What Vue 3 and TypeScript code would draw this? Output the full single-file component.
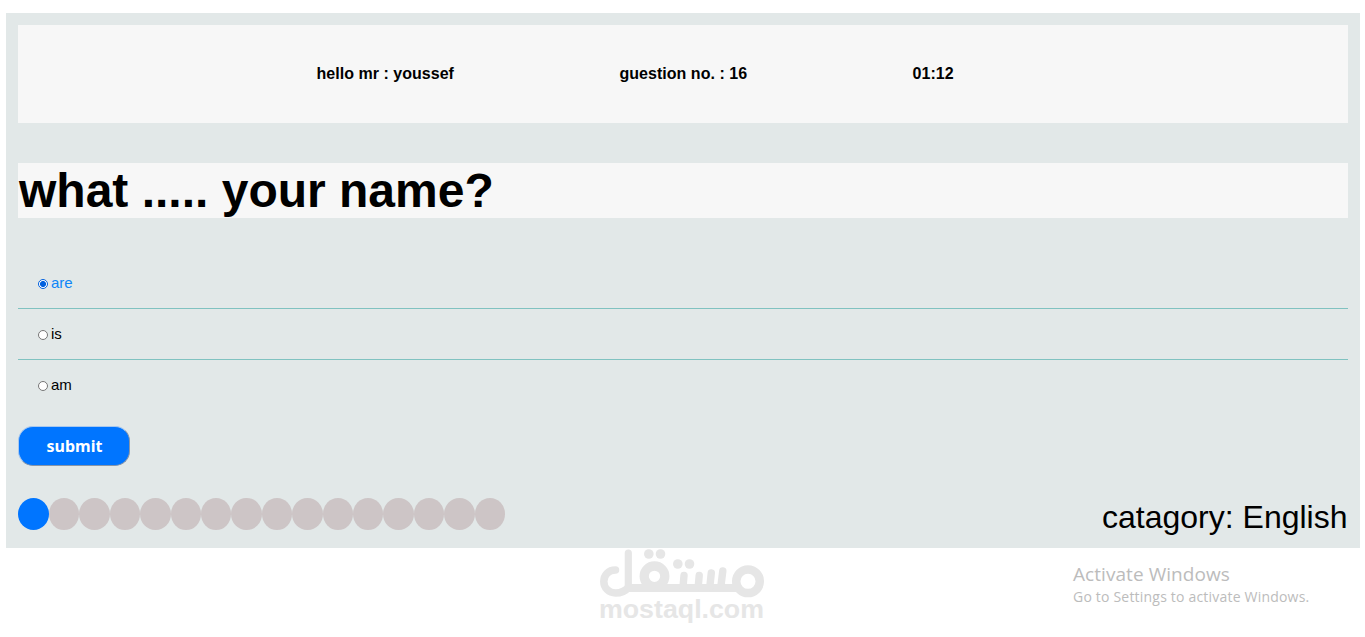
<script setup lang="ts">
import { ref } from 'vue'

const answers: string[] = ['are', 'is', 'am']
const selected = ref<string>('are')
const questionCount = 16
const current = 1
</script>

<template>
  <main class="page">
    <section class="quiz">
      <header class="info">
        <span>hello mr : youssef</span>
        <span>guestion no. : 16</span>
        <span>01:12</span>
      </header>
      <h1 class="question">what ..... your name?</h1>
      <div class="answers">
        <label v-for="a in answers" :key="a" class="answer" :class="{ chosen: selected === a }">
          <input v-model="selected" type="radio" name="answer" :value="a" />
          <span class="mark"></span>
          <span>{{ a }}</span>
        </label>
      </div>
      <button class="submit" type="button">submit</button>
      <footer class="bottom">
        <div class="dots">
          <span v-for="n in questionCount" :key="n" class="dot" :class="{ on: n === current }"></span>
        </div>
        <div class="category">catagory: English</div>
      </footer>
    </section>

    <svg class="brand" width="190" height="90" viewBox="0 0 190 90">
      <g fill="none" stroke="#e6e6e6" stroke-linecap="round" stroke-linejoin="round">
        <path stroke-width="7.5" d="M25.500 30C18.500 30 13.800 35 13.800 41.500C13.800 48 19 53 25.500 53C31 53 35 51.500 38.300 47.500" />
        <path stroke-width="7.2" d="M38.300 13V47" />
        <circle cx="64.500" cy="36.300" r="10.300" stroke-width="9.300" />
        <circle cx="158" cy="41.300" r="11.800" stroke-width="8.500" />
        <path stroke-width="8.200" stroke-linecap="butt" d="M35 48H147" />
        <path stroke-width="7.400" d="M94 35.500L93 47M109.200 35.500L108.200 47M121.300 33L119.800 47M132.800 31L130.800 47" />
      </g>
      <g fill="#e6e6e6">
        <circle cx="58.800" cy="14" r="4.800" />
        <circle cx="70.500" cy="14" r="4.800" />
        <circle cx="87.800" cy="24" r="4.800" />
        <circle cx="99.500" cy="24" r="4.800" />
        <text x="9" y="78" textLength="165" lengthAdjust="spacingAndGlyphs">mostaql.com</text>
      </g>
    </svg>

    <aside class="activate">
      <div class="activate-title">Activate Windows</div>
      <div class="activate-text">Go to Settings to activate Windows.</div>
    </aside>
  </main>
</template>

<style>
body {
  margin: 0;
  background: #fff;
  overflow: hidden;
}
</style>

<style scoped>
.page {
  position: relative;
  box-sizing: border-box;
  height: 637px;
  padding: 13px 5px 0 6px;
  font-family: Arial, "Liberation Sans", sans-serif;
  color: #000;
}
.quiz {
  box-sizing: border-box;
  height: 535px;
  padding: 12px;
  background: #e2e8e8;
}
.info {
  box-sizing: border-box;
  display: flex;
  gap: 165.500px;
  height: 98px;
  padding: 40px 0 0 298.500px;
  background: #f7f7f7;
  font-size: 16px;
  line-height: 18px;
  font-weight: bold;
  letter-spacing: 0.030px;
}
.question {
  box-sizing: border-box;
  height: 55px;
  margin: 40px 0;
  padding-left: 1px;
  background: #f7f7f7;
  font-size: 48px;
  line-height: 55px;
}
.answer {
  box-sizing: border-box;
  display: flex;
  align-items: flex-start;
  height: 51px;
  padding: 16px 0 0 20px;
  border-bottom: 1px solid #80c2c0;
  font-size: 15px;
  line-height: 17px;
}
.answer:last-child {
  border-bottom: 0;
}
.answer input {
  position: absolute;
  opacity: 0;
}
.mark {
  box-sizing: border-box;
  width: 10px;
  height: 10px;
  margin: 5px 3px 0 0;
  border: 1px solid #767676;
  border-radius: 50%;
  background: #fff;
}
.chosen {
  color: #0d86f8;
}
.chosen .mark {
  border-color: #0060df;
  background: radial-gradient(circle, #0060df 2.7px, #fff 3.3px);
}
.submit {
  display: block;
  box-sizing: border-box;
  width: 112px;
  height: 40px;
  margin-top: 15px;
  padding: 0 0 0 1px;
  border: 1px solid;
  border-color: #a9c8ee #8795a8 #8795a8 #a9c8ee;
  border-radius: 15px;
  background: #0075ff;
  color: #fff;
  font-family: "Noto Sans", sans-serif;
  font-size: 16px;
  font-weight: bold;
}
.bottom {
  display: flex;
  justify-content: space-between;
  margin-top: 32px;
}
.dots {
  display: flex;
  width: 487px;
}
.dot {
  flex: 1;
  height: 32px;
  border-radius: 50%;
  background: #cdc5c6;
}
.dot.on {
  flex: 0 0 31px;
  background: #0075ff;
}
.category {
  padding-right: 0.500px;
  font-size: 32px;
  line-height: 38px;
}
.brand {
  position: absolute;
  left: 590px;
  top: 540px;
}
.brand text {
  font: bold 26px "Liberation Sans", Arial, sans-serif;
}
.activate {
  position: absolute;
  left: 1073px;
  top: 561px;
  color: #bcbcbc;
  font-family: "Open Sans", "Noto Sans", sans-serif;
  white-space: nowrap;
}
.activate-title {
  font-size: 19px;
  line-height: 26px;
  letter-spacing: 0.060px;
}
.activate-text {
  font-size: 14px;
  line-height: 20px;
  letter-spacing: 0.200px;
}
</style>
